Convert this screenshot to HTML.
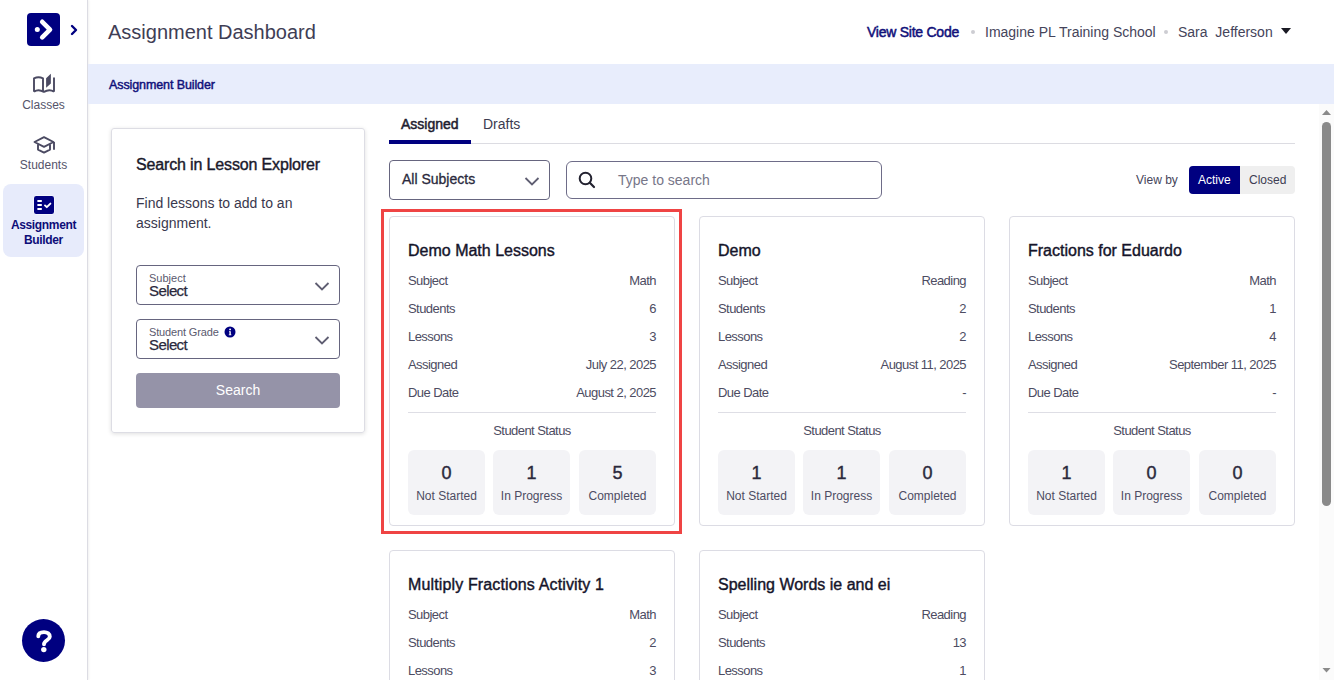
<!DOCTYPE html>
<html><head><meta charset="utf-8">
<style>
*{box-sizing:border-box;margin:0;padding:0}
html,body{width:1334px;height:680px;overflow:hidden;background:#fff;font-family:"Liberation Sans",sans-serif;color:#3d3c52}
.abs{position:absolute}
#side{position:absolute;left:0;top:0;width:88px;height:680px;background:#fff;border-right:1px solid #dcdce3;box-shadow:1px 0 2px rgba(0,0,0,0.06)}
.logo{position:absolute;left:27px;top:13px;width:33px;height:33px;background:#000080;border-radius:4px}
.navlbl{position:absolute;left:0;width:87px;text-align:center;font-size:12px;color:#55546a;white-space:nowrap}
.active{position:absolute;left:3px;top:184px;width:81px;height:73px;background:#e7ebfb;border-radius:8px}
.help{position:absolute;left:22px;top:619px;width:43px;height:43px;border-radius:50%;background:#000080}
.title{position:absolute;left:108px;top:20.5px;font-size:20px;color:#3f3e55;white-space:nowrap}
.hdr{position:absolute;top:23.5px;font-size:14px;color:#45445a;white-space:nowrap}
.dot{position:absolute;top:30px;width:4px;height:4px;border-radius:50%;background:#cdcdd2}
#banner{position:absolute;left:88px;top:64px;width:1246px;height:40px;background:#e8edfc}
#banner span{position:absolute;left:21px;top:14px;font-size:12.5px;letter-spacing:-0.1px;color:#10107a;-webkit-text-stroke:0.45px #10107a;white-space:nowrap}
.panel{position:absolute;left:111px;top:128px;width:254px;height:305px;border:1px solid #dddde4;border-radius:3px;box-shadow:0 1px 4px rgba(0,0,0,0.13)}
.sel{position:absolute;left:136px;width:204px;height:40px;border:1px solid #66657f;border-radius:4px}
.sel .lb{position:absolute;left:12px;top:6px;font-size:11px;color:#5a596e;white-space:nowrap}
.sel .v{position:absolute;left:12px;top:16px;font-size:15px;letter-spacing:-0.6px;color:#2a293c;-webkit-text-stroke:0.25px #2a293c;white-space:nowrap}
.chev{position:absolute}
.btn{position:absolute;left:136px;top:373px;width:204px;height:35px;border-radius:4px;background:#9593a8;color:#fff;font-size:14px;text-align:center;line-height:35px}
.tab{position:absolute;top:116px;font-size:14px;white-space:nowrap}
.card{position:absolute;width:286px;height:310px;border:1px solid #dcdce4;border-radius:4px;background:#fff}
.card h3{position:absolute;left:18px;top:24.5px;font-size:16px;font-weight:normal;color:#15142a;-webkit-text-stroke:0.4px #15142a;white-space:nowrap}
.row{position:absolute;left:18px;right:18px;height:16px;font-size:13px;letter-spacing:-0.55px;color:#4d4c62}
.row .r{position:absolute;right:0;top:0;white-space:nowrap}
.row .l{position:absolute;left:0;top:0;white-space:nowrap}
.sep{position:absolute;left:18px;right:18px;top:195px;height:1px;background:#dedee5}
.ss{position:absolute;left:0;right:0;top:206px;text-align:center;font-size:13px;letter-spacing:-0.55px;color:#4d4c62}
.stat{position:absolute;top:233px;width:77px;height:65px;border-radius:6px;background:#f3f3f6;text-align:center}
.stat .n{position:absolute;left:0;right:0;top:13.4px;font-size:18px;color:#2a293c;-webkit-text-stroke:0.4px #2a293c}
.stat .t{position:absolute;left:0;right:0;top:39px;font-size:12px;color:#4d4c62;white-space:nowrap}
</style></head>
<body>
<div id="side">
  <div class="logo">
    <svg width="33" height="33" viewBox="0 0 33 33" style="position:absolute;left:0;top:0">
      <circle cx="10.3" cy="16.6" r="2.5" fill="#fff"/>
      <polyline points="15.2,8.8 23,16.6 15.2,24.4" fill="none" stroke="#fff" stroke-width="4.6" stroke-linecap="round" stroke-linejoin="round"/>
    </svg>
  </div>
  <svg class="abs" style="left:69px;top:23px" width="10" height="14" viewBox="0 0 10 14"><polyline points="3,3 7,7 3,11" fill="none" stroke="#000080" stroke-width="2.4" stroke-linecap="round" stroke-linejoin="round"/></svg>
  <svg class="abs" style="left:30px;top:70px" width="28" height="26" viewBox="0 0 28 26">
    <path d="M4,21.8 L4,8.3 Q8.5,6.3 13,8.3 L13,21.8" fill="none" stroke="#4b4a62" stroke-width="1.9" stroke-linejoin="round"/>
    <path d="M4,21.6 Q8.5,18.6 13.9,21.9 Q19.3,18.6 24,21.6" fill="none" stroke="#4b4a62" stroke-width="1.9" stroke-linejoin="round"/>
    <path d="M24,7.6 L24,21.8" fill="none" stroke="#4b4a62" stroke-width="1.9"/>
    <path d="M16.1,8.2 L20.85,3.8 L20.85,13.6 L16.1,17.8 Z" fill="#4b4a62"/>
  </svg>
  <div class="navlbl" style="top:98px">Classes</div>
  <svg class="abs" style="left:30px;top:132px" width="28" height="26" viewBox="0 0 28 26">
    <path d="M4.5,10 L14,5.1 L23.5,10 L14,14.8 Z" fill="none" stroke="#4b4a62" stroke-width="1.9" stroke-linejoin="round"/>
    <path d="M8,12.3 L8,17.6 L14,20.6 L20,17.6 L20,12.3" fill="none" stroke="#4b4a62" stroke-width="1.9" stroke-linejoin="round"/>
    <path d="M24,10 L24,17.7" fill="none" stroke="#4b4a62" stroke-width="1.9"/>
  </svg>
  <div class="navlbl" style="top:158px">Students</div>
  <div class="active"></div>
  <svg class="abs" style="left:33px;top:195px" width="22" height="20" viewBox="0 0 22 20">
    <rect x="0.5" y="0.5" width="21" height="19" rx="3" fill="#fff"/>
    <rect x="1" y="1" width="20" height="18" rx="2.2" fill="#000080"/>
    <path d="M5.1,6 L8.1,6 M5.1,10 L8.1,10 M5.1,14 L8.1,14" stroke="#fff" stroke-width="1.9" stroke-linecap="round"/>
    <polyline points="12,10.4 13.8,12.2 17.4,8.6" fill="none" stroke="#fff" stroke-width="1.9" stroke-linecap="round" stroke-linejoin="round"/>
  </svg>
  <div class="navlbl" style="top:218px;font-weight:bold;color:#0d0d78;line-height:15px;letter-spacing:-0.35px">Assignment<br>Builder</div>
  <div class="help">
    <svg width="43" height="43" viewBox="0 0 43 43" style="position:absolute;left:0;top:0">
      <path d="M16.3,17.2 C16.3,14 18.8,13.1 22,13.1 C25.4,13.1 27.8,15 27.8,17.7 C27.8,21 22,21.6 22,25.2" fill="none" stroke="#fff" stroke-width="3.9" stroke-linecap="round" stroke-linejoin="round"/>
      <circle cx="21.8" cy="30.6" r="2.7" fill="#fff"/>
    </svg>
  </div>
</div>

<div class="title">Assignment Dashboard</div>
<div class="hdr" style="left:867px;color:#10107a;-webkit-text-stroke:0.5px #10107a;letter-spacing:-0.25px">View Site Code</div>
<div class="dot" style="left:971px"></div>
<div class="hdr" style="left:985px">Imagine PL Training School</div>
<div class="dot" style="left:1164px"></div>
<div class="hdr" style="left:1178px">Sara&nbsp; Jefferson</div>
<svg class="abs" style="left:1280px;top:27px" width="12" height="8" viewBox="0 0 12 8"><path d="M1,1 L11,1 L6,7 Z" fill="#1a1a24"/></svg>

<div id="banner"><span>Assignment Builder</span></div>

<div class="panel"></div>
<div class="abs" style="left:136px;top:156px;font-size:16px;letter-spacing:-0.15px;color:#1a192b;-webkit-text-stroke:0.4px #1a192b;white-space:nowrap">Search in Lesson Explorer</div>
<div class="abs" style="left:136px;top:193px;font-size:14px;line-height:20px;color:#39384d;white-space:nowrap">Find lessons to add to an<br>assignment.</div>
<div class="sel" style="top:265px"><div class="lb">Subject</div><div class="v">Select</div></div>
<div class="sel" style="top:319px"><div class="lb" style="letter-spacing:-0.15px">Student Grade</div><div class="v">Select</div></div>
<svg class="abs" style="left:224px;top:325.5px" width="12" height="12" viewBox="0 0 12 12"><circle cx="6" cy="6" r="5.5" fill="#000080"/><path d="M5,5.2 L6.8,5.2 L6.8,8.4 L7.4,8.4 L7.4,9.2 L4.8,9.2 L4.8,8.4 L5.4,8.4 L5.4,6 L5,6 Z" fill="#fff"/><circle cx="6.1" cy="3.4" r="0.95" fill="#fff"/></svg>
<svg class="abs" style="left:314px;top:281px" width="16" height="11" viewBox="0 0 16 11"><polyline points="1.5,2 8,8.5 14.5,2" fill="none" stroke="#5f5e72" stroke-width="1.8"/></svg>
<svg class="abs" style="left:314px;top:335px" width="16" height="11" viewBox="0 0 16 11"><polyline points="1.5,2 8,8.5 14.5,2" fill="none" stroke="#5f5e72" stroke-width="1.8"/></svg>
<div class="btn">Search</div>

<div class="tab" style="left:401px;color:#1e1d30;-webkit-text-stroke:0.5px #1e1d30">Assigned</div>
<div class="tab" style="left:483px;color:#3c3b50">Drafts</div>
<div class="abs" style="left:389px;top:143px;width:906px;height:1px;background:#dcdce2"></div>
<div class="abs" style="left:389px;top:140px;width:82px;height:4px;background:#000080"></div>

<div class="abs" style="left:389px;top:160px;width:161px;height:40px;border:1px solid #66657f;border-radius:4px"></div>
<div class="abs" style="left:402px;top:171.3px;font-size:14px;color:#2a293c;-webkit-text-stroke:0.3px #2a293c;white-space:nowrap">All Subjects</div>
<svg class="abs" style="left:524px;top:175.7px" width="16" height="11" viewBox="0 0 16 11"><polyline points="1.5,2 8,8.5 14.5,2" fill="none" stroke="#5f5e72" stroke-width="1.8"/></svg>
<div class="abs" style="left:566px;top:161px;width:316px;height:38px;border:1.5px solid #6e6c88;border-radius:6px"></div>
<svg class="abs" style="left:578px;top:171px" width="18" height="18" viewBox="0 0 18 18"><circle cx="7.5" cy="7.5" r="5.8" fill="none" stroke="#232230" stroke-width="2"/><line x1="11.8" y1="11.8" x2="16" y2="16" stroke="#232230" stroke-width="2.2" stroke-linecap="round"/></svg>
<div class="abs" style="left:618px;top:172px;font-size:14px;color:#777688;white-space:nowrap">Type to search</div>

<div class="abs" style="left:1136px;top:173px;font-size:12px;color:#45445a;white-space:nowrap">View by</div>
<div class="abs" style="left:1189px;top:166px;width:106px;height:28px;border-radius:4px;background:#efefef;overflow:hidden">
  <div class="abs" style="left:0;top:0;width:51px;height:28px;background:#000080"></div>
  <div class="abs" style="left:9px;top:7px;font-size:12px;color:#fff">Active</div>
  <div class="abs" style="left:60px;top:7px;font-size:12px;color:#3d3c52">Closed</div>
</div>

<!--CARDS-->
<div class="card" style="left:389px;top:216px">
  <h3>Demo Math Lessons</h3>
  <div class="row" style="top:56px"><span class="l">Subject</span><span class="r">Math</span></div>
  <div class="row" style="top:84px"><span class="l">Students</span><span class="r">6</span></div>
  <div class="row" style="top:112px"><span class="l">Lessons</span><span class="r">3</span></div>
  <div class="row" style="top:140px"><span class="l">Assigned</span><span class="r">July 22, 2025</span></div>
  <div class="row" style="top:168px"><span class="l">Due Date</span><span class="r">August 2, 2025</span></div>
  <div class="sep"></div>
  <div class="ss">Student Status</div>
  <div class="stat" style="left:18px"><div class="n">0</div><div class="t">Not Started</div></div>
  <div class="stat" style="left:103px"><div class="n">1</div><div class="t">In Progress</div></div>
  <div class="stat" style="left:189px"><div class="n">5</div><div class="t">Completed</div></div>
</div>
<div class="card" style="left:699px;top:216px">
  <h3>Demo</h3>
  <div class="row" style="top:56px"><span class="l">Subject</span><span class="r">Reading</span></div>
  <div class="row" style="top:84px"><span class="l">Students</span><span class="r">2</span></div>
  <div class="row" style="top:112px"><span class="l">Lessons</span><span class="r">2</span></div>
  <div class="row" style="top:140px"><span class="l">Assigned</span><span class="r">August 11, 2025</span></div>
  <div class="row" style="top:168px"><span class="l">Due Date</span><span class="r">-</span></div>
  <div class="sep"></div>
  <div class="ss">Student Status</div>
  <div class="stat" style="left:18px"><div class="n">1</div><div class="t">Not Started</div></div>
  <div class="stat" style="left:103px"><div class="n">1</div><div class="t">In Progress</div></div>
  <div class="stat" style="left:189px"><div class="n">0</div><div class="t">Completed</div></div>
</div>
<div class="card" style="left:1009px;top:216px">
  <h3>Fractions for Eduardo</h3>
  <div class="row" style="top:56px"><span class="l">Subject</span><span class="r">Math</span></div>
  <div class="row" style="top:84px"><span class="l">Students</span><span class="r">1</span></div>
  <div class="row" style="top:112px"><span class="l">Lessons</span><span class="r">4</span></div>
  <div class="row" style="top:140px"><span class="l">Assigned</span><span class="r">September 11, 2025</span></div>
  <div class="row" style="top:168px"><span class="l">Due Date</span><span class="r">-</span></div>
  <div class="sep"></div>
  <div class="ss">Student Status</div>
  <div class="stat" style="left:18px"><div class="n">1</div><div class="t">Not Started</div></div>
  <div class="stat" style="left:103px"><div class="n">0</div><div class="t">In Progress</div></div>
  <div class="stat" style="left:189px"><div class="n">0</div><div class="t">Completed</div></div>
</div>
<div class="card" style="left:389px;top:550px">
  <h3 style="letter-spacing:0.14px">Multiply Fractions Activity 1</h3>
  <div class="row" style="top:56px"><span class="l">Subject</span><span class="r">Math</span></div>
  <div class="row" style="top:84px"><span class="l">Students</span><span class="r">2</span></div>
  <div class="row" style="top:112px"><span class="l">Lessons</span><span class="r">3</span></div>
  <div class="row" style="top:140px"><span class="l">Assigned</span><span class="r"></span></div>
  <div class="row" style="top:168px"><span class="l">Due Date</span><span class="r"></span></div>
  <div class="sep"></div>
  <div class="ss">Student Status</div>
</div>
<div class="card" style="left:699px;top:550px">
  <h3>Spelling Words ie and ei</h3>
  <div class="row" style="top:56px"><span class="l">Subject</span><span class="r">Reading</span></div>
  <div class="row" style="top:84px"><span class="l">Students</span><span class="r">13</span></div>
  <div class="row" style="top:112px"><span class="l">Lessons</span><span class="r">1</span></div>
  <div class="row" style="top:140px"><span class="l">Assigned</span><span class="r"></span></div>
  <div class="row" style="top:168px"><span class="l">Due Date</span><span class="r"></span></div>
  <div class="sep"></div>
  <div class="ss">Student Status</div>
</div>
<!--/CARDS-->
<div class="abs" style="left:381px;top:209px;width:301px;height:325px;border:3px solid #ef4444"></div>

<!-- scrollbar -->
<div class="abs" style="left:1319px;top:104px;width:15px;height:576px;background:#fbfbfb"></div>
<svg class="abs" style="left:1319px;top:104px" width="15" height="576" viewBox="0 0 15 576">
  <path d="M3,11 L7.5,6 L12,11 Z" fill="#8a8a8a"/>
  <rect x="3" y="18" width="9" height="384" rx="4.5" fill="#8a8a8a"/>
  <path d="M3.5,564 L7.5,568.5 L11.5,564 Z" fill="#8a8a8a"/>
</svg>
</body></html>
